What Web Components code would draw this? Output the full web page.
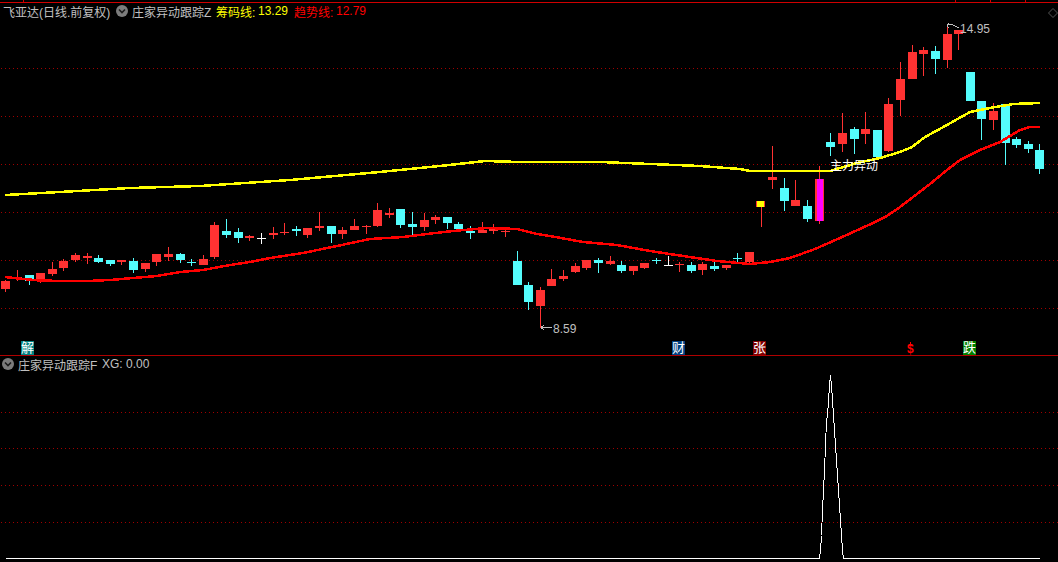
<!DOCTYPE html>
<html lang="zh">
<head>
<meta charset="utf-8">
<title>飞亚达</title>
<style>
  html, body { margin: 0; height: 100%; background: #000; overflow: hidden; }
  body { font: 12px "Liberation Sans", "Noto Sans CJK SC", sans-serif; color: #c0c0c0; }
</style>
</head>
<body>
<kline-app></kline-app>

<script>
const NS = 'http://www.w3.org/2000/svg';
const COLORS = { r: '#ff3232', c: '#54fcfc', w: '#ffffff' };

// type, high, body top, body bottom, low (in pane pixels)
const CANDLES = [
  ['r',280,281,289,292],['r',270,277,279,281],['c',275,275,281,285],['r',273,273,280,283],['r',262,269,274,276],
  ['r',259,261,268,271],['r',253,255,260,262],['r',253,256,258,264],['c',255,258,262,263],['c',260,260,264,266],
  ['r',260,260,262,265],['c',258,261,270,273],['r',263,263,269,272],['r',254,254,262,266],['r',247,254,257,261],
  ['c',253,254,260,263],['c',259,262,263,266],['r',255,259,265,265],['r',222,225,257,259],['c',219,231,235,238],
  ['c',228,232,238,243],['r',235,236,238,241],['w',233,238,239,244],['r',227,233,235,239],['r',223,232,233,235],
  ['c',226,229,231,236],['r',228,228,235,238],['r',212,226,228,231],['c',226,226,234,243],['r',227,230,234,239],
  ['r',219,226,230,230],['r',225,226,227,234],['r',203,210,226,227],['r',208,213,215,218],['c',209,209,225,228],
  ['c',212,224,227,235],['r',213,220,227,231],['r',215,217,220,224],['c',217,217,223,229],['c',222,224,229,229],
  ['c',226,231,233,239],['r',222,230,233,233],['r',224,228,231,234],['r',228,231,232,237],['c',251,261,285,285],
  ['c',282,285,302,310],['r',287,290,306,328],['r',269,279,286,286],['r',270,276,279,281],['r',263,266,272,273],
  ['r',260,260,268,270],['c',258,260,263,273],['r',256,261,264,265],['c',261,265,271,273],['r',266,266,271,275],
  ['r',263,263,268,269],['c',258,260,261,264],['w',256,265,266,266],['r',262,264,265,272],['c',262,265,271,273],
  ['r',262,264,270,275],['c',262,266,269,271],['r',265,265,268,270],['c',253,258,259,262],['r',252,252,262,263],
  ['y',201,201,207,227],['r',146,177,180,189],['c',178,188,201,211],['r',180,200,206,206],['c',200,206,219,222],
  ['m',166,179,221,224],['c',133,142,147,156],['r',113,133,144,152],['c',127,129,139,154],['r',112,129,134,144],
  ['c',130,130,157,157],['r',98,104,151,152],['r',62,79,100,116],['r',45,52,79,79],['r',47,50,54,76],
  ['c',46,51,59,74],['r',25,34,60,68],['r',30,30,34,50],['c',72,72,101,101],['c',101,101,119,140],
  ['r',103,111,120,130],['c',104,104,143,165],['c',137,139,145,148],['c',141,144,149,153],['c',144,150,169,174]
];

const YELLOW_LINE = [[5,195],[60,192],[130,188],[200,186],[290,180],[380,172],[440,166],[485,161],[520,162],[600,162],[650,164],[700,166],[740,169],[750,171],[830,171],[857,163],[880,158],[900,152],[912,147],[925,137],[947,125],[970,112],[990,108],[1013,104],[1040,103]];
const RED_LINE = [[5,277],[23,279],[40,280.5],[63,281],[87,281],[110,280],[133,278],[157,276],[180,272],[203,270],[227,265.5],[250,262],[270,258],[303,253],[337,246],[370,239],[403,237],[427,234],[453,231],[487,228],[517,229],[537,234],[550,236],[583,242],[617,245],[650,251],[683,256],[717,261],[750,264],[770,262],[790,258],[815,249],[840,238],[873,223],[887,216],[900,207],[930,184],[947,170],[960,160],[980,150],[1000,142],[1020,130],[1030,127],[1040,127]];
const SPIKE = [[5,558],[819,558],[820,550],[821,535],[822,510],[823,490],[824,470],[825,445],[826,420],[827,415],[828,400],[829,385],[830,375],[831,385],[832,400],[833,415],[834,430],[835,445],[836,460],[837,475],[838,490],[839,505],[840,520],[841,535],[842,550],[843,558],[1039,558]];

function el(name, attrs, parent) {
  const node = document.createElementNS(NS, name);
  for (const k in attrs) node.setAttribute(k, attrs[k]);
  if (parent) parent.appendChild(node);
  return node;
}

function rect(parent, x, y, w, h, fill) {
  return el('rect', { x, y, width: w, height: h, fill }, parent);
}

function polyline(parent, pts, stroke, width) {
  return el('polyline', { points: pts.map(p => p.join(',')).join(' '), fill: 'none', stroke, 'stroke-width': width }, parent);
}

function dotted(parent, y) {
  el('line', { x1: 1, x2: 1058, y1: y + 0.5, y2: y + 0.5, stroke: '#a00000', 'stroke-dasharray': '1 3' }, parent);
}

// -- pane-title --
class PaneTitle extends HTMLElement {
  connectedCallback() {
    if (this.shadowRoot) return;
    this.attachShadow({ mode: 'open' });
    this.shadowRoot.innerHTML = `
      <style>
        :host { display: flex; align-items: center; height: 16px; white-space: nowrap; font-family: "Liberation Sans", "Noto Sans CJK SC", sans-serif; font-size: 12px; color: #c0c0c0; }
      </style>
      <slot></slot>
    `;
  }
}
customElements.define('pane-title', PaneTitle);

// -- fold-button --
class FoldButton extends HTMLElement {
  connectedCallback() {
    if (this.shadowRoot) return;
    this.attachShadow({ mode: 'open' });
    this.shadowRoot.innerHTML = `
      <style>
        :host { display: inline-block; width: 12px; height: 12px; flex: none; }
        svg { display: block; }
      </style>
      <svg width="12" height="12" viewBox="0 0 12 12">
        <circle cx="6" cy="6" r="6" fill="#7c7c7c"/>
        <path d="M3 4.5 L6 7.5 L9 4.5" fill="none" stroke="#1c1c1c" stroke-width="1.6"/>
      </svg>
    `;
  }
}
customElements.define('fold-button', FoldButton);

// -- title-item --
class TitleItem extends HTMLElement {
  connectedCallback() {
    if (this.shadowRoot) return;
    this.attachShadow({ mode: 'open' });
    this.shadowRoot.innerHTML = `
      <style>
        :host { display: inline-block; flex: none; width: var(--w, auto); color: var(--c, inherit); }
      </style>
      <slot></slot>
    `;
    const w = this.getAttribute('width');
    if (w) this.style.setProperty('--w', w + 'px');
    const c = this.getAttribute('color');
    if (c) this.style.setProperty('--c', c);
  }
}
customElements.define('title-item', TitleItem);

// -- chart-mark: badges and notes placed on the chart at a price/time spot --
class ChartMark extends HTMLElement {
  connectedCallback() {
    if (this.shadowRoot) return;
    this.attachShadow({ mode: 'open' });
    const badge = this.hasAttribute('bg');
    this.shadowRoot.innerHTML = `
      <style>
        :host {
          position: absolute;
          left: ${this.getAttribute('x')}px;
          top: ${this.getAttribute('y')}px;
          display: block;
          white-space: nowrap;
          line-height: 14px;
          font-size: ${badge ? 13 : 12}px;
          text-align: center;
          font-family: "Liberation Sans", "Noto Sans CJK SC", sans-serif;
          color: ${this.getAttribute('color') || '#c0c0c0'};
          background: ${this.getAttribute('bg') || 'transparent'};
          ${badge ? 'width: 13px; height: 14px; overflow: hidden;' : ''}
        }
      </style>
      <slot></slot>
    `;
  }
}
customElements.define('chart-mark', ChartMark);

// -- price-plot --
class PricePlot extends HTMLElement {
  connectedCallback() {
    if (this.shadowRoot) return;
    this.attachShadow({ mode: 'open' });
    this.shadowRoot.innerHTML = `
      <style>
        :host { position: absolute; inset: 0; display: block; }
        svg { display: block; shape-rendering: crispEdges; }
      </style>
      <svg width="1058" height="355" viewBox="0 0 1058 355"></svg>
    `;
    const svg = this.shadowRoot.querySelector('svg');
    // top rule and its ticks
    rect(svg, 0, 2, 1058, 1, '#d00000');
    [23, 955, 990, 1025].forEach(x => rect(svg, x, 0, 1, 2, '#d00000'));
    [68, 116, 164, 212, 260, 308].forEach(y => dotted(svg, y));
    el('path', { d: 'M1053 8.5 L1057.5 13 L1053 17.5 L1048.5 13 Z', fill: 'none', stroke: '#555', 'shape-rendering': 'auto' }, svg);

    CANDLES.forEach((c, i) => {
      const [t, hi, top, bot, lo] = c;
      const x = Math.round(5.3 + i * 11.62);
      const h = Math.max(bot - top, 1);
      const wick = t === 'y' || t === 'm' ? COLORS.r : COLORS[t];
      rect(svg, x, hi, 1, lo - hi, wick);
      if (t === 'y') {
        rect(svg, x - 5, top, 9, h, COLORS.r);
        rect(svg, x - 4, top, 7, h, '#ffff00');
      } else if (t === 'm') {
        rect(svg, x - 4, top, 9, h, COLORS.r);
        rect(svg, x - 2, top, 6, h, '#ff00ff');
      } else {
        rect(svg, x - 4, top, 9, h, COLORS[t]);
      }
    });

    polyline(svg, YELLOW_LINE, '#ffff00', 2.5);
    polyline(svg, RED_LINE, '#ff0000', 2.5);

    // low and high arrows
    el('path', { d: 'M541 327.5 H552 M541 327.5 L544 325 M541 327.5 L544 330', fill: 'none', stroke: '#c0c0c0' }, svg);
    el('path', { d: 'M947 25.5 L951 24 L959 28 M947 25.5 L949 23 M947 25.5 L949 28', fill: 'none', stroke: '#c0c0c0' }, svg);
    // stem of the red $ signal
    el('path', { d: 'M910.5 342 L913 346 H908 Z', fill: '#ff0000' }, svg);
  }
}
customElements.define('price-plot', PricePlot);

// -- signal-plot --
class SignalPlot extends HTMLElement {
  connectedCallback() {
    if (this.shadowRoot) return;
    this.attachShadow({ mode: 'open' });
    this.shadowRoot.innerHTML = `
      <style>
        :host { position: absolute; inset: 0; display: block; }
        svg { display: block; shape-rendering: crispEdges; }
      </style>
      <svg width="1058" height="206" viewBox="0 356 1058 206"></svg>
    `;
    const svg = this.shadowRoot.querySelector('svg');
    [412, 448, 485, 522].forEach(y => dotted(svg, y));
    polyline(svg, SPIKE.map(p => [p[0] + 0.5, p[1] + 0.5]), '#ffffff', 1);
  }
}
customElements.define('signal-plot', SignalPlot);

// -- kline-app --
class KlineApp extends HTMLElement {
  connectedCallback() {
    if (this.shadowRoot) return;
    this.attachShadow({ mode: 'open' });
    this.shadowRoot.innerHTML = `
      <style>
        :host { display: flex; flex-direction: column; width: 1058px; height: 562px; background: #000; }
        .pane { position: relative; }
        .main { height: 355px; }
        .sub { flex: 1; border-top: 1px solid #b00000; }
        .title { position: relative; }
        .main .title { padding: 3px 0 0 3px; }
        .sub .title { padding: 0 0 0 2px; }
        .dollar { font-weight: 700; }
      </style>
      <div class="pane main">
        <price-plot></price-plot>
        <div class="title">
          <pane-title>
            <title-item width="113">飞亚达(日线.前复权)</title-item>
            <fold-button></fold-button>
            <title-item width="84" style="margin-left:4px">庄家异动跟踪Z</title-item>
            <title-item width="42" color="#ffff00">筹码线:</title-item>
            <title-item width="36" color="#ffff00">13.29</title-item>
            <title-item width="42" color="#ff0000">趋势线:</title-item>
            <title-item color="#ff0000">12.79</title-item>
          </pane-title>
        </div>
        <chart-mark x="830" y="159" color="#ffffff">主力异动</chart-mark>
        <chart-mark x="553" y="322">8.59</chart-mark>
        <chart-mark x="960" y="22">14.95</chart-mark>
        <chart-mark x="21" y="341" bg="#008080" color="#ffffff">解</chart-mark>
        <chart-mark x="672" y="341" bg="#004080" color="#ffffff">财</chart-mark>
        <chart-mark x="753" y="341" bg="#800000" color="#ffffff">张</chart-mark>
        <chart-mark class="dollar" x="907" y="342" color="#ff0000">$</chart-mark>
        <chart-mark x="963" y="341" bg="#008000" color="#ffffff">跌</chart-mark>
      </div>
      <div class="pane sub">
        <signal-plot></signal-plot>
        <div class="title">
          <pane-title>
            <fold-button></fold-button>
            <title-item width="84" style="margin-left:4px">庄家异动跟踪F</title-item>
            <title-item>XG: 0.00</title-item>
          </pane-title>
        </div>
      </div>
    `;
  }
}
customElements.define('kline-app', KlineApp);
</script>
</body>
</html>
